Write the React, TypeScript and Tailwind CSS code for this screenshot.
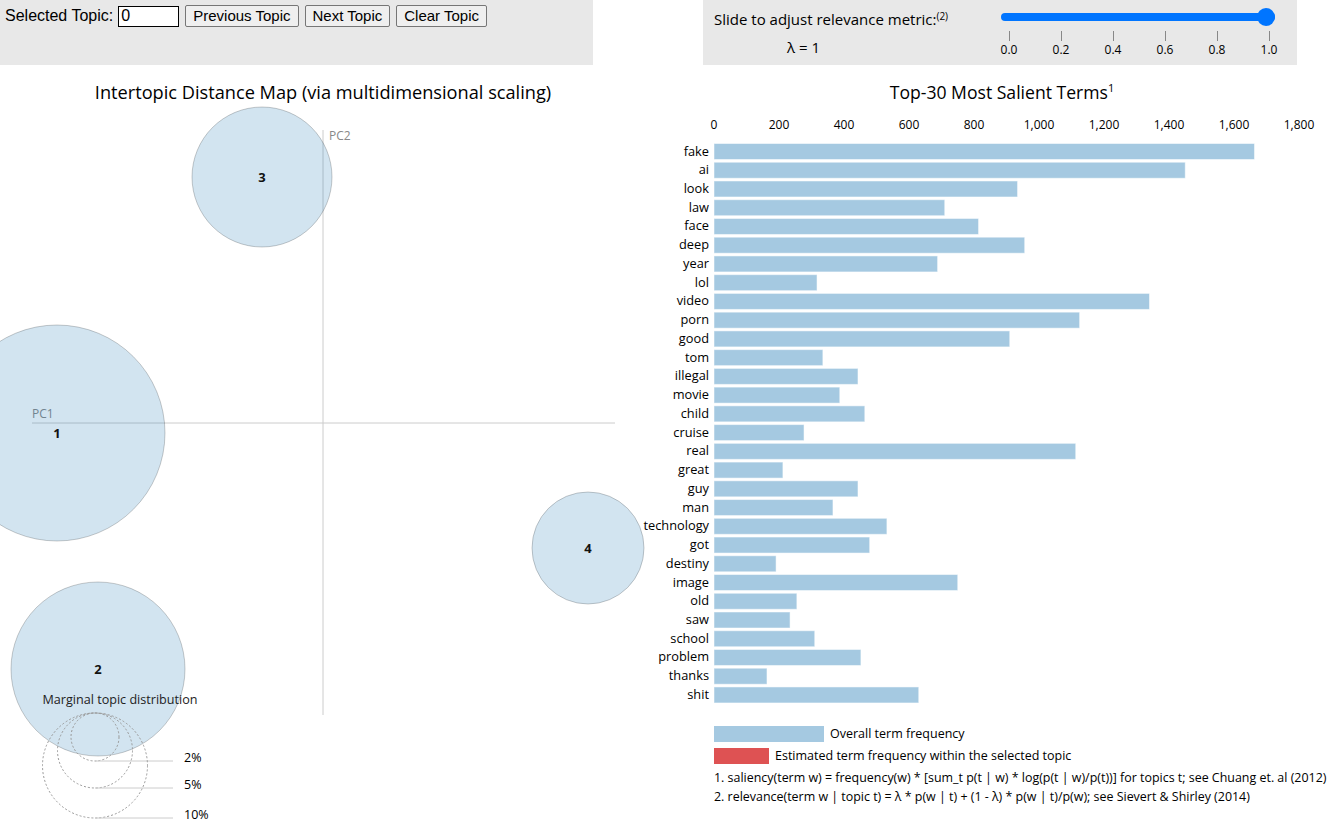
import React from 'react';

const terms: [string, number][] = [
  ['fake', 1663], ['ai', 1450], ['look', 934], ['law', 710], ['face', 814],
  ['deep', 956], ['year', 688], ['lol', 317], ['video', 1340], ['porn', 1125],
  ['good', 910], ['tom', 335], ['illegal', 443], ['movie', 387], ['child', 464],
  ['cruise', 277], ['real', 1113], ['great', 212], ['guy', 443], ['man', 366],
  ['technology', 532], ['got', 479], ['destiny', 191], ['image', 750], ['old', 255],
  ['saw', 234], ['school', 310], ['problem', 452], ['thanks', 163], ['shit', 630],
];

const topics = [
  { id: 1, cx: 57, cy: 433, r: 108 },
  { id: 2, cx: 98, cy: 669, r: 87 },
  { id: 3, cx: 262, cy: 177, r: 70 },
  { id: 4, cx: 588, cy: 548, r: 56 },
];

const legendCircles = [
  { r: 24, label: '2%' },
  { r: 37.5, label: '5%' },
  { r: 52.5, label: '10%' },
];

const ticks = [0, 200, 400, 600, 800, 1000, 1200, 1400, 1600, 1800];
const X0 = 714;
const SCALE = 585 / 1800;

function TopicMap() {
  return (
    <svg
      width={640}
      height={757}
      viewBox="0 66 640 757"
      overflow="visible"
      className="block shrink-0 font-['Open_Sans',sans-serif]"
    >
      <text x={323} y={99} textAnchor="middle" fontSize={18.2} fill="#000">
        Intertopic Distance Map (via multidimensional scaling)
      </text>
      <line x1={323} y1={130} x2={323} y2={715} stroke="#ccc" />
      <line x1={32} y1={423} x2={615} y2={423} stroke="#ccc" />
      <text x={329} y={140} fontSize={12} fill="#888">PC2</text>
      <text x={32} y={418} fontSize={12} fill="#888">PC1</text>
      {topics.map((t) => (
        <g key={t.id}>
          <circle cx={t.cx} cy={t.cy} r={t.r} fill="#1f77b4" fillOpacity={0.2} stroke="#000" strokeOpacity={0.2} />
          <text x={t.cx} y={t.cy + 5} textAnchor="middle" fontSize={13} fontWeight="bold" fill="#111">
            {t.id}
          </text>
        </g>
      ))}
      <text x={120} y={704} textAnchor="middle" fontSize={12.6} fill="#222">
        Marginal topic distribution
      </text>
      {legendCircles.map((c) => (
        <g key={c.label}>
          <circle cx={95} cy={713 + c.r} r={c.r} fill="none" stroke="#999" strokeDasharray="2 2" />
          <line x1={95} y1={713 + 2 * c.r} x2={173} y2={713 + 2 * c.r} stroke="#ccc" />
          <text x={184} y={c.r > 50 ? 819 : 714 + 2 * c.r} fontSize={12.5} fill="#000">
            {c.label}
          </text>
        </g>
      ))}
    </svg>
  );
}

function TermBars() {
  return (
    <svg
      width={695}
      height={757}
      viewBox="640 66 695 757"
      className="block shrink-0 font-['Open_Sans',sans-serif]"
    >
      <text x={1002} y={99} textAnchor="middle" fontSize={17.6} fill="#000">
        Top-30 Most Salient Terms
        <tspan fontSize={11} dy={-7}>1</tspan>
      </text>
      {ticks.map((v) => (
        <text key={v} x={X0 + v * SCALE} y={129} textAnchor="middle" fontSize={12} fill="#000">
          {v.toLocaleString('en-US')}
        </text>
      ))}
      {terms.map(([term, v], i) => {
        const cy = 151.5 + i * 18.74;
        return (
          <g key={term}>
            <rect x={X0} y={cy - 8} width={v * SCALE} height={16} fill="#1f77b4" fillOpacity={0.4} stroke="#fff" strokeOpacity={0.5} />
            <text x={709} y={cy + 4} textAnchor="end" fontSize={12.8} fill="#000">
              {term}
            </text>
          </g>
        );
      })}
      <rect x={714} y={726} width={110} height={16} fill="#1f77b4" fillOpacity={0.4} />
      <text x={830} y={738} fontSize={12.5} fill="#000">Overall term frequency</text>
      <rect x={714} y={748} width={55} height={16} fill="#d62728" fillOpacity={0.8} />
      <text x={775} y={760} fontSize={12.5} fill="#000">
        Estimated term frequency within the selected topic
      </text>
      <text x={714} y={782} fontSize={12.45} fill="#000">
        1. saliency(term w) = frequency(w) * [sum_t p(t | w) * log(p(t | w)/p(t))] for topics t; see Chuang et. al (2012)
      </text>
      <text x={714} y={801} fontSize={12.45} fill="#000">
        2. relevance(term w | topic t) = λ * p(w | t) + (1 - λ) * p(w | t)/p(w); see Sievert &amp; Shirley (2014)
      </text>
    </svg>
  );
}

function TopicControls() {
  const btn =
    'h-[22px] px-[7px] bg-[#efefef] border border-[#767676] rounded-[2px] text-[15px] leading-[18px] text-black';
  return (
    <div className="w-[593px] h-[65px] bg-[#e8e8e8] flex items-start pt-[5px] pl-[5px] gap-[6px] text-[16px] text-black font-['Liberation_Sans',Arial,sans-serif]">
      <div className="flex items-center gap-[5px]">
        <span className="leading-[22px]">Selected Topic:</span>
        <input
          readOnly
          value="0"
          className="w-[61px] h-[21px] bg-white border border-black px-[2px] text-[16px] leading-[18px] outline-none"
        />
      </div>
      <button className={btn}>Previous Topic</button>
      <button className={btn}>Next Topic</button>
      <button className={btn}>Clear Topic</button>
    </div>
  );
}

function RelevanceSlider() {
  const labels = ['0.0', '0.2', '0.4', '0.6', '0.8', '1.0'];
  return (
    <div className="w-[594px] h-[65px] bg-[#e8e8e8] flex text-black font-['Open_Sans',sans-serif]">
      <div className="w-[298px] pl-[11px] pt-[9px] flex flex-col">
        <div className="text-[15px] leading-[20px] whitespace-nowrap">
          Slide to adjust relevance metric:<sup className="text-[10px]">(2)</sup>
        </div>
        <div className="text-[15px] leading-[20px] mt-[8px] pl-[73px]">λ = 1</div>
      </div>
      <div className="flex flex-col pt-[9px]">
        <div className="relative w-[274px] h-[16px] flex items-center">
          <div className="w-full h-[8px] rounded-full bg-[#0075ff]" />
          <div className="absolute right-[0px] top-[-1px] w-[18px] h-[18px] rounded-full bg-[#0075ff]" />
        </div>
        <div className="flex justify-between w-[276px] mt-[6px]">
          {labels.map((l) => (
            <div key={l} className="flex flex-col items-center w-[16px]">
              <div className="w-px h-[10px] bg-[#888]" />
              <span className="text-[12px] leading-[14px] mt-[2px]">{l}</span>
            </div>
          ))}
        </div>
      </div>
    </div>
  );
}

export default function App() {
  return (
    <div className="w-[1335px] h-[823px] bg-white overflow-hidden">
      <div className="flex gap-[110px]">
        <TopicControls />
        <RelevanceSlider />
      </div>
      <div className="flex mt-[1px]">
        <TopicMap />
        <TermBars />
      </div>
    </div>
  );
}
